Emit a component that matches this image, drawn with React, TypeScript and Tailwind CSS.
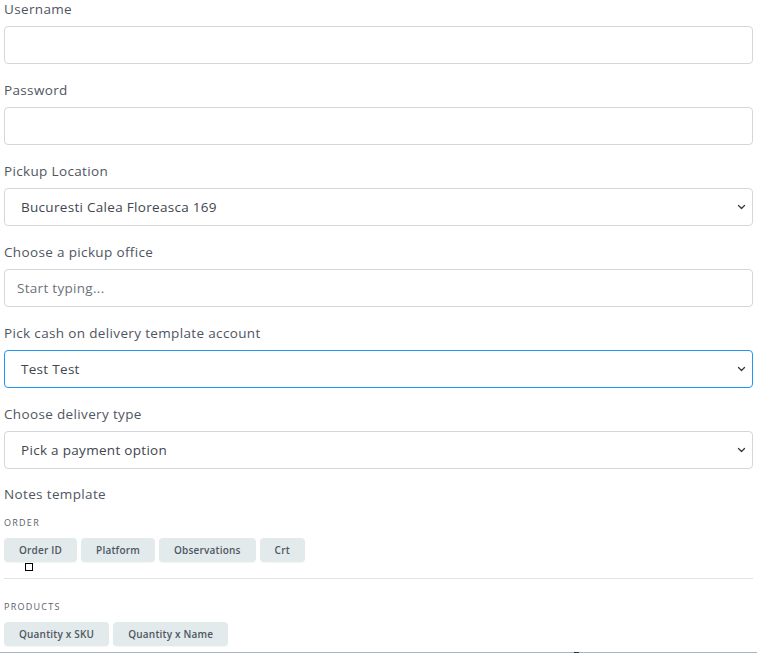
import React from "react";

const Chevron = () => (
  <svg width="11" height="8" viewBox="0 0 16 16" className="absolute right-[5px] top-1/2 -translate-y-1/2">
    <path d="M2 5l6 6 6-6" fill="none" stroke="#343a40" strokeWidth="2.6" strokeLinecap="round" strokeLinejoin="round" />
  </svg>
);

const Label = ({ children }: { children: React.ReactNode }) => (
  <div className="h-[18px] leading-[18px] text-[13.5px] tracking-[0.35px] font-medium text-[#4f5661] mb-2">{children}</div>
);

const Field = ({ label, children }: { label: string; children: React.ReactNode }) => (
  <div className="mb-[17px]">
    <Label>{label}</Label>
    {children}
  </div>
);

const Box = ({ children, focus }: { children?: React.ReactNode; focus?: boolean }) => (
  <div
    className={`relative h-[38px] rounded-[4px] border ${focus ? "border-[#2196f3]" : "border-[#d3d7dc]"} bg-white flex items-center`}
  >
    {children}
  </div>
);

const Chip = ({ children }: { children: React.ReactNode }) => (
  <div className="h-6 px-[15px] rounded-[4px] bg-[#e2eaec] text-[10px] tracking-[0.2px] font-semibold text-[#4f5661] flex items-center shadow-[0_1px_1px_rgba(0,0,0,0.04)]">
    {children}
  </div>
);

export default function App() {
  return (
    <div className="relative w-[757px] h-[653px] bg-white overflow-hidden" style={{ fontFamily: '"Open Sans", "Noto Sans", sans-serif' }}>
      <div className="ml-1 w-[749px]">
        <Field label="Username">
          <Box />
        </Field>
        <Field label="Password">
          <Box />
        </Field>
        <Field label="Pickup Location">
          <Box>
            <span className="pl-4 text-[13.5px] tracking-[0.3px] text-[#3f4650]">Bucuresti Calea Floreasca 169</span>
            <Chevron />
          </Box>
        </Field>
        <Field label="Choose a pickup office">
          <Box>
            <span className="pl-3 text-[13.5px] tracking-[0.3px] text-[#6c727a]">Start typing...</span>
          </Box>
        </Field>
        <Field label="Pick cash on delivery template account">
          <Box focus>
            <span className="pl-4 text-[13.5px] tracking-[0.3px] text-[#3f4650]">Test Test</span>
            <Chevron />
          </Box>
        </Field>
        <Field label="Choose delivery type">
          <Box>
            <span className="pl-4 text-[13.5px] tracking-[0.3px] text-[#3f4650]">Pick a payment option</span>
            <Chevron />
          </Box>
        </Field>
        <div className="h-[18px] leading-[18px] text-[13.5px] tracking-[0.35px] font-medium text-[#4f5661] mt-[-1px]">Notes template</div>
        <div className="mt-[14px] text-[9px] font-medium tracking-[0.14em] text-[#5a616b] leading-[12px]">ORDER</div>
        <div className="mt-[9px] flex gap-1">
          <Chip>Order ID</Chip>
          <Chip>Platform</Chip>
          <Chip>Observations</Chip>
          <Chip>Crt</Chip>
        </div>
        <div className="ml-[21px] mt-[1px] w-2 h-2 border border-black bg-white" />
        <div className="mt-[7px] h-px bg-[#e3e3e3]" />
        <div className="mt-[22px] text-[9px] font-medium tracking-[0.14em] text-[#5a616b] leading-[12px]">PRODUCTS</div>
        <div className="mt-[9px] flex gap-1">
          <Chip>Quantity x SKU</Chip>
          <Chip>Quantity x Name</Chip>
        </div>
      </div>
      <div className="absolute left-0 right-0 bottom-0 h-px bg-[#a5b3c4]">
        <div className="absolute left-[574px] w-[5px] h-px bg-[#333]" />
      </div>
    </div>
  );
}
